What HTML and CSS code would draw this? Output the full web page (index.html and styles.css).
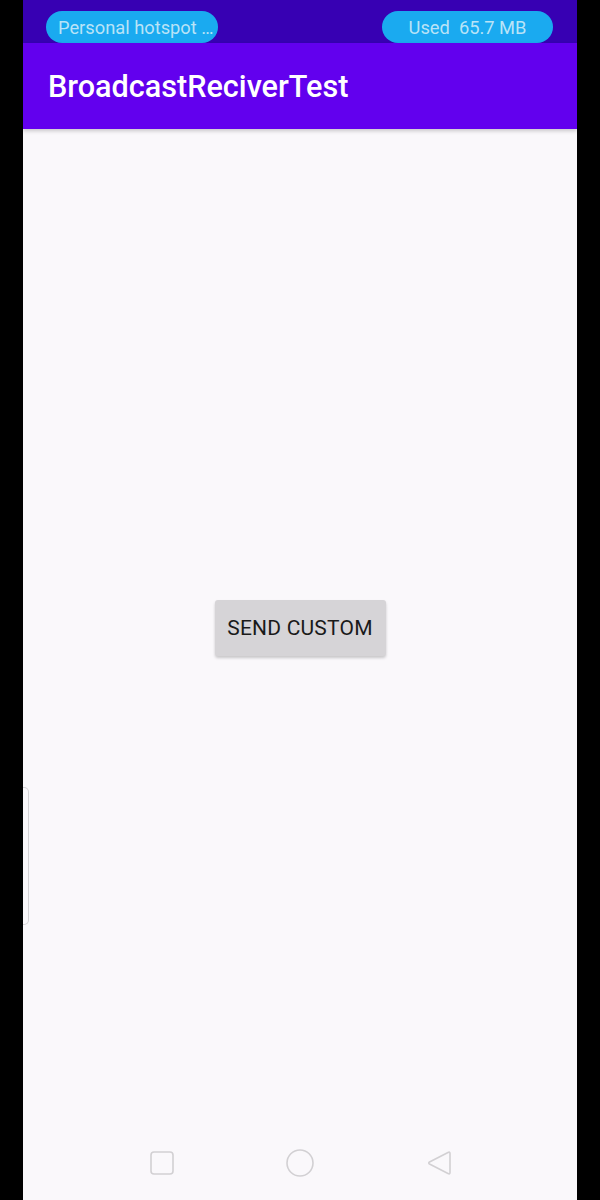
FILE: index.html
```html
<!DOCTYPE html>
<html>
<head>
<meta charset="utf-8">
<link rel="stylesheet" href="styles.css">
</head>
<body>
<div class="frame">
  <div class="screen">
    <div class="status">
      <div class="pill pill-left">Personal hotspot …</div>
      <div class="pill pill-right">Used&nbsp; 65.7 MB</div>
    </div>
    <div class="appbar">BroadcastReciverTest</div>
    <div class="content">
      <button class="btn">SEND CUSTOM</button>
      <div class="handle"></div>
    </div>
    <div class="nav">
      <svg width="26" height="26" viewBox="0 0 26 26"><rect x="2" y="2" width="22" height="22" rx="3" fill="none" stroke="#d2d0d3" stroke-width="1.6"/></svg>
      <svg width="30" height="30" viewBox="0 0 30 30"><circle cx="15" cy="15" r="13" fill="none" stroke="#d2d0d3" stroke-width="1.6"/></svg>
      <svg width="26" height="28" viewBox="0 0 26 28"><path d="M22 3.5 Q24 2.5 24 4.5 V23.5 Q24 25.5 22 24.5 L3.5 15 Q2 14 3.5 13 Z" fill="none" stroke="#d2d0d3" stroke-width="1.6" stroke-linejoin="round"/></svg>
    </div>
  </div>
</div>
</body>
</html>
```
FILE: styles.css
```css
html, body {
  margin: 0;
  padding: 0;
  background: #000;
}
.frame {
  width: 600px;
  height: 1200px;
  display: flex;
  justify-content: center;
  background: #000;
}
.screen {
  width: 554px;
  height: 1200px;
  background: #faf8fb;
  display: flex;
  flex-direction: column;
  font-family: Roboto, "Liberation Sans", sans-serif;
}
.status {
  height: 43px;
  background: #3700b3;
  display: flex;
  justify-content: space-between;
  align-items: flex-start;
  padding: 11px 24px 0 23px;
  box-sizing: border-box;
}
.pill {
  height: 32px;
  border-radius: 16px;
  background: #1aaaf0;
  color: #b9e3f7;
  font-size: 18.3px;
  line-height: 33px;
  box-sizing: border-box;
}
.pill-left {
  width: 172px;
  padding-left: 12px;
}
.pill-right {
  width: 171px;
  text-align: center;
}
.appbar {
  height: 86px;
  background: #6200ee;
  color: #fff;
  font-size: 30.6px;
  font-weight: 500;
  line-height: 88px;
  padding-left: 25px;
  box-shadow: 0 2px 4px rgba(0,0,0,0.2);
  position: relative;
  z-index: 1;
}
.content {
  flex: 1;
  display: flex;
  justify-content: center;
  position: relative;
}
.btn {
  margin-top: 471px;
  width: 171px;
  height: 56px;
  border: none;
  border-radius: 3px;
  background: #d6d4d7;
  color: #1a1a1a;
  font-family: Roboto, "Liberation Sans", sans-serif;
  font-size: 21px;
  font-weight: 400;
  letter-spacing: 0.2px;
  box-shadow: 0 2px 3px rgba(0,0,0,0.2);
  padding: 0;
}
.handle {
  position: absolute;
  left: 0;
  top: 658px;
  width: 5px;
  height: 136px;
  border: 1.5px solid #d4d2d5;
  border-left: none;
  border-radius: 0 5px 5px 0;
}
.nav {
  height: 76px;
  display: flex;
  justify-content: center;
  align-items: center;
  gap: 110.5px;
  padding-top: 2px;
  box-sizing: border-box;
}
```
